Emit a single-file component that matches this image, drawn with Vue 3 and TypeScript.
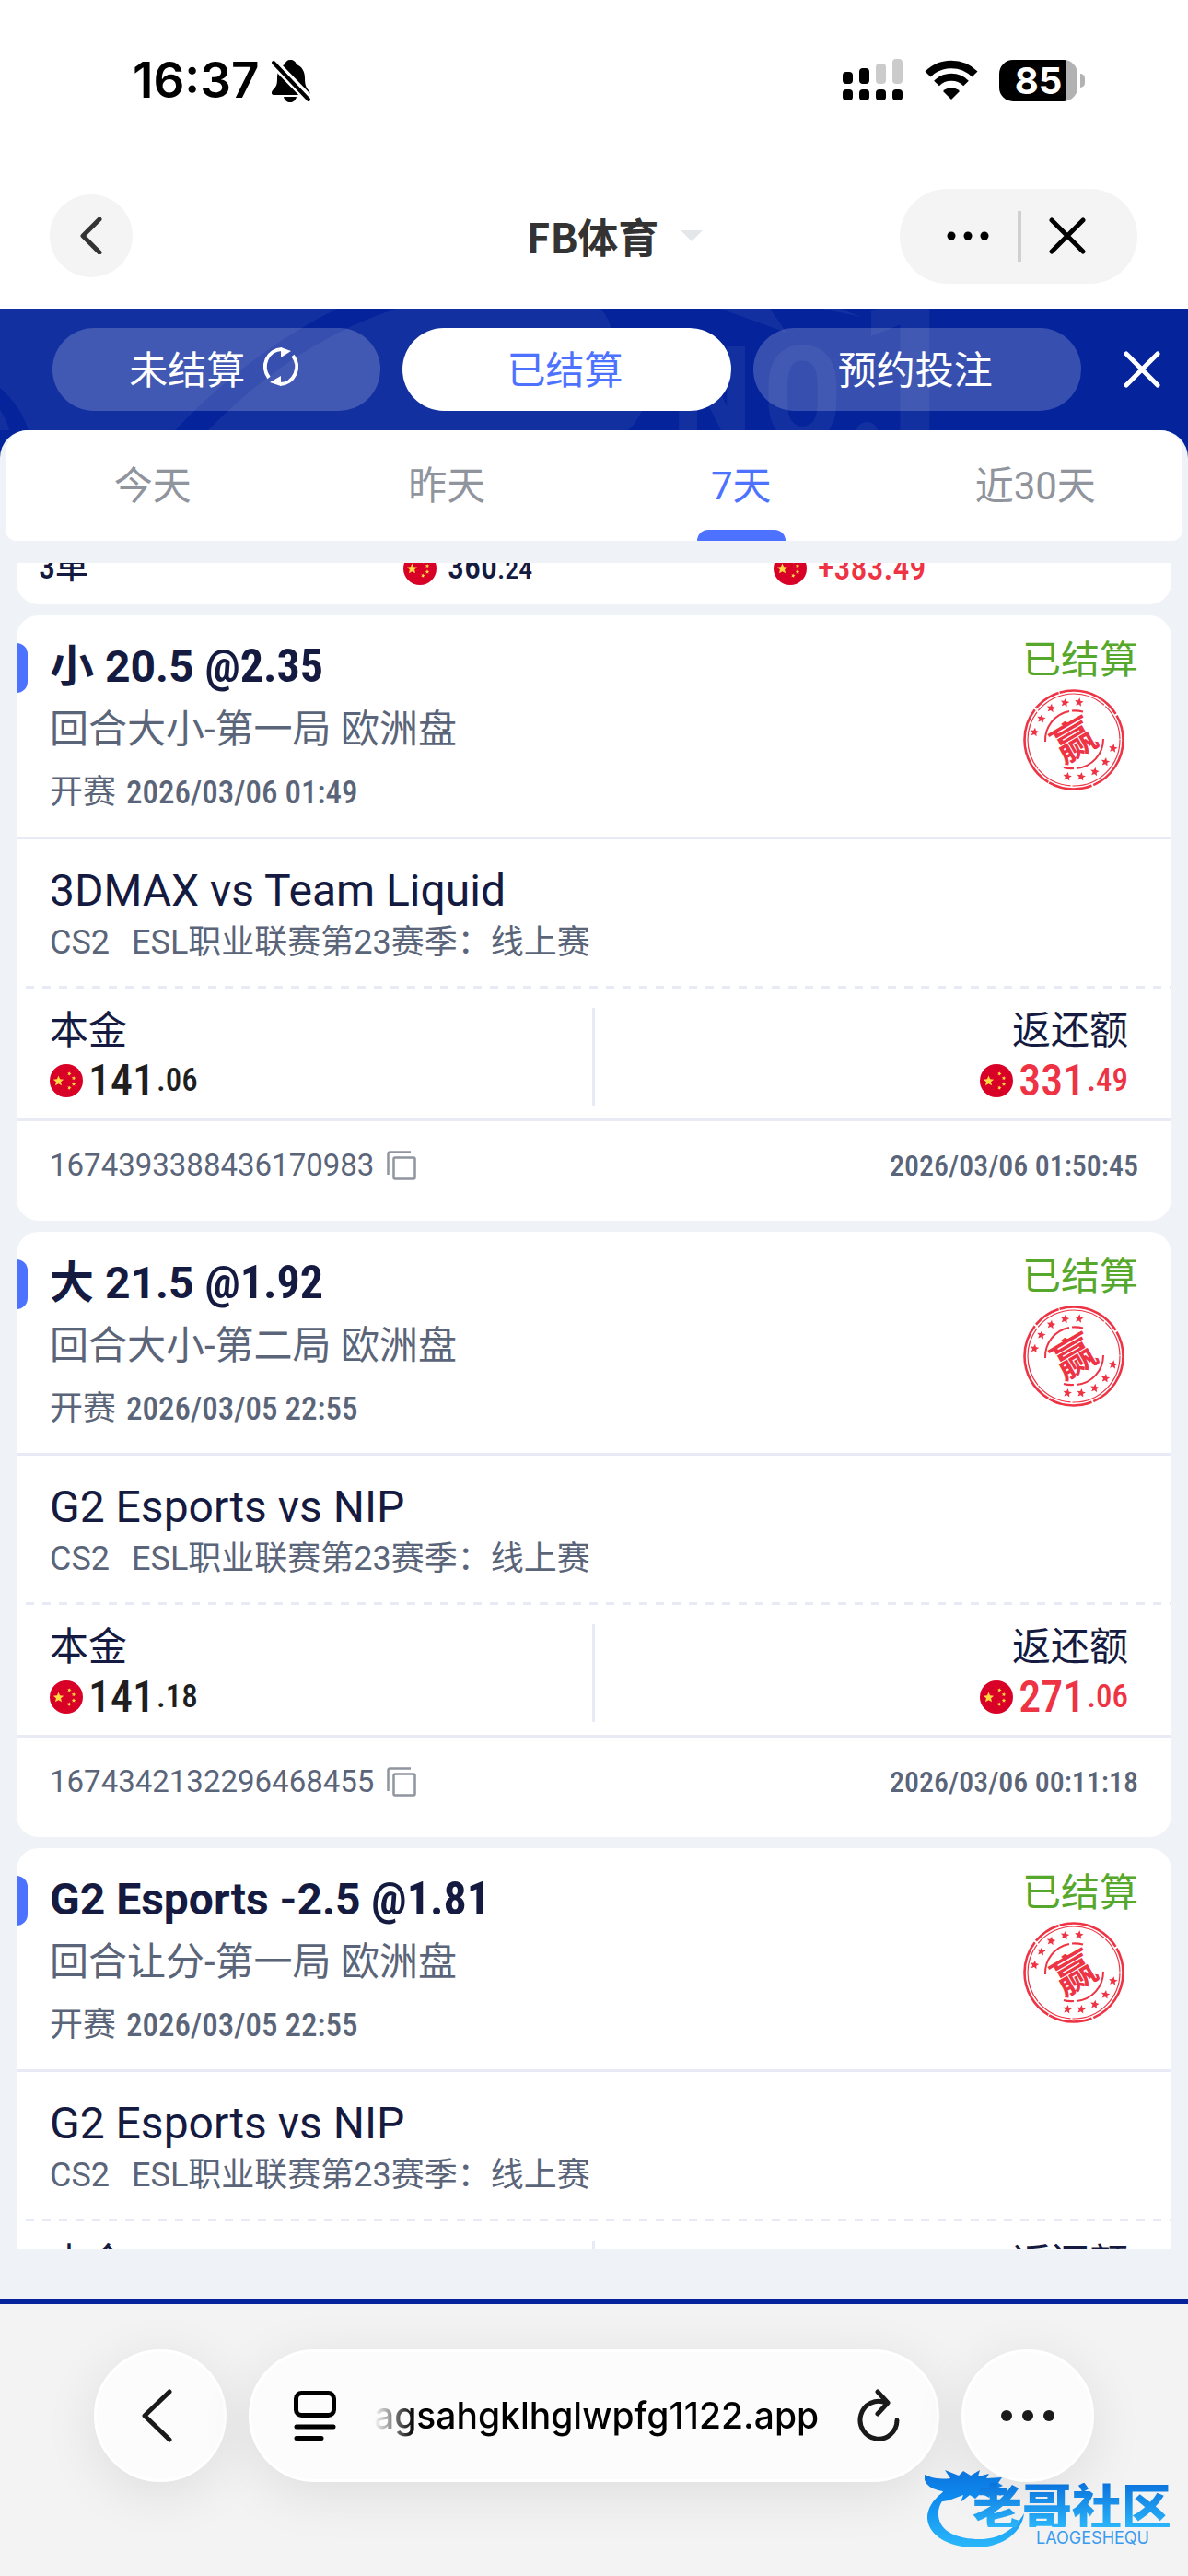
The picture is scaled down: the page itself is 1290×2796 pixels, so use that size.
<script setup lang="ts">
import { ref } from 'vue'

interface Bet {
  pick: string
  odds: string
  market: string
  start: string
  match: string
  league: string
  stake: [string, string]
  payout: [string, string]
  id: string
  settledAt: string
}

const league = 'ESL职业联赛第23赛季：线上赛'

const bets: Bet[] = [
  {
    pick: '小 20.5', odds: '@2.35', market: '回合大小-第一局 欧洲盘', start: '2026/03/06 01:49',
    match: '3DMAX vs Team Liquid', league, stake: ['141', '.06'], payout: ['331', '.49'],
    id: '1674393388436170983', settledAt: '2026/03/06 01:50:45',
  },
  {
    pick: '大 21.5', odds: '@1.92', market: '回合大小-第二局 欧洲盘', start: '2026/03/05 22:55',
    match: 'G2 Esports vs NIP', league, stake: ['141', '.18'], payout: ['271', '.06'],
    id: '1674342132296468455', settledAt: '2026/03/06 00:11:18',
  },
  {
    pick: 'G2 Esports -2.5', odds: '@1.81', market: '回合让分-第一局 欧洲盘', start: '2026/03/05 22:55',
    match: 'G2 Esports vs NIP', league, stake: ['78', '.00'], payout: ['141', '.18'],
    id: '1674342098112086142', settledAt: '2026/03/05 23:41:06',
  },
]

const ranges = ['今天', '昨天', '7天', '近30天']
const activeRange = ref(2)
const address = ref('agsahgklhglwpfg1122.app')

function star(cx: number, cy: number, r: number, turn = 0): string {
  const pts: string[] = []
  for (let i = 0; i < 10; i++) {
    const a = (Math.PI / 5) * i - Math.PI / 2 + turn
    const d = i % 2 === 0 ? r : r * 0.45
    pts.push(`${(cx + d * Math.cos(a)).toFixed(2)},${(cy + d * Math.sin(a)).toFixed(2)}`)
  }
  return pts.join(' ')
}

const flagStars = [
  star(9.5, 18.5, 6), star(21.3, 10.5, 2.4, 0.3), star(26, 15.3, 2.4, 0.1),
  star(26, 21.7, 2.4), star(21.3, 25.7, 2.4, 0.3),
]
const stampStars = [
  [12.3, 46.7], [19.7, 32], [30.3, 20.7], [45.3, 14.7], [60.7, 14.3],
  [97.7, 64.3], [89.3, 79], [77.7, 89.7], [63, 95], [48, 95],
].map(([x, y]) => star(x, y, 5, 0.15))
</script>

<template>
  <div class="app">
    <svg width="0" height="0" class="defs" aria-hidden="true">
      <symbol id="flag" viewBox="0 0 36 36">
        <circle cx="18" cy="18" r="18" fill="#d80027" />
        <polygon v-for="(p, i) in flagStars" :key="i" :points="p" fill="#ffda44" />
      </symbol>
    </svg>

    <div class="status">
      <div class="status-left">
        <span class="clock">16:37</span>
        <svg width="44" height="48" viewBox="0 0 44 48" aria-hidden="true">
          <path d="M21 2c4 0 6 2 7 5 6 2 9 8 9 15 0 8 2 11 5 14 1 3 0 4-3 4H4c-3 0-4-2-2-5 4-4 5-6 5-13 0-8 3-13 8-15 1-3 3-5 6-5z" />
          <path d="M14 42h14c-1 4-4 6-7 6s-6-2-7-6z" />
          <path d="M2 4l40 41" stroke="#fff" stroke-width="10" />
          <path d="M3 5l38 40" stroke="#000" stroke-width="4" stroke-linecap="round" />
        </svg>
      </div>
      <div class="status-right">
        <svg width="66" height="46" viewBox="0 0 66 46" aria-hidden="true">
          <rect x="0" y="14" width="11" height="13" rx="4" />
          <rect x="18" y="10" width="11" height="17" rx="4" />
          <rect x="36" y="5" width="11" height="22" rx="4" fill="#cbcbcb" />
          <rect x="54" y="0" width="11" height="27" rx="4" fill="#cbcbcb" />
          <rect v-for="x in [0, 18, 36, 54]" :key="x" :x="x" y="33" width="11" height="12" rx="4" />
        </svg>
        <svg width="58" height="44" viewBox="0 0 58 44" aria-hidden="true">
          <path d="M3.500 15.500a36 36 0 0 1 51 0" fill="none" stroke="#000" stroke-width="8.500" />
          <path d="M13 25.500a22.500 22.500 0 0 1 32 0" fill="none" stroke="#000" stroke-width="8" />
          <path d="M29 43l-9-9a12.700 12.700 0 0 1 18 0z" />
        </svg>
        <div class="battery">
          <span class="battery-body">85</span>
          <span class="battery-nub"></span>
        </div>
      </div>
    </div>

    <nav class="nav">
      <button class="nav-back" aria-label="返回">
        <svg width="24" height="40" viewBox="0 0 24 40"><path d="M21 2L3 20l18 18" /></svg>
      </button>
      <h1 class="nav-title">FB体育 <i class="caret"></i></h1>
      <div class="capsule">
        <button aria-label="更多">
          <svg width="46" height="10" viewBox="0 0 46 10"><circle v-for="x in [5, 23, 41]" :key="x" :cx="x" cy="5" r="4.500" /></svg>
        </button>
        <i class="capsule-line"></i>
        <button aria-label="关闭">
          <svg width="40" height="40" viewBox="0 0 40 40"><path d="M3 3l34 34M37 3L3 37" fill="none" stroke="#000" stroke-width="5" stroke-linecap="round" /></svg>
        </button>
      </div>
    </nav>

    <div class="page">
      <header class="hero">
        <svg class="hero-art" viewBox="0 0 1290 132" preserveAspectRatio="none" aria-hidden="true">
          <g fill="#fff" fill-opacity="0.060">
            <path d="M0 0H366Q270 48 190 132H31Q22 105 0 86z" />
            <path d="M0 110Q7 120 10 132H0z" />
            <path d="M430 0H652Q664 12 664 30L700 100Q696 120 682 132H226Q320 36 430 0z" />
            <path d="M782 0h54l18 26zM892 0h20l24 9z" />
            <text x="729" y="144" class="art-no">N</text>
            <text x="828" y="144" class="art-no">O</text>
            <text x="921" y="144" class="art-no">.</text>
            <text x="928" y="144" class="art-one">1</text>
          </g>
        </svg>
        <button class="pill">
          未结算
          <svg width="42" height="44" viewBox="0 0 42 44" aria-hidden="true">
            <path d="M8 34A18.500 19 0 0 1 22 3M34 10A18.500 19 0 0 1 20 41" fill="none" stroke="#fff" stroke-width="4" />
            <path d="M21 1l11 4-11 7zM21 43l-12-4 12-7z" fill="#fff" />
          </svg>
        </button>
        <button class="pill active">已结算</button>
        <button class="pill">预约投注</button>
        <button class="hero-close" aria-label="关闭">
          <svg width="40" height="40" viewBox="0 0 40 40"><path d="M3 3l34 34M37 3L3 37" fill="none" stroke="#fff" stroke-width="5" stroke-linecap="round" /></svg>
        </button>
      </header>

      <main class="panel">
        <div class="tabs" role="tablist">
          <button
            v-for="(r, i) in ranges" :key="r" role="tab" class="tab"
            :class="{ on: i === activeRange }" :aria-selected="i === activeRange" @click="activeRange = i"
          >{{ r }}</button>
        </div>

        <div class="list">
          <section class="summary">
            <span class="count">3单</span>
            <span class="sum"><svg class="flag"><use href="#flag" /></svg><b>360<small>.24</small></b></span>
            <span class="sum win"><svg class="flag"><use href="#flag" /></svg><b>+383.49</b></span>
          </section>

          <article v-for="b in bets" :key="b.id" class="card">
            <div class="head">
              <div class="head-text">
                <h2>{{ b.pick }} <span class="odds">{{ b.odds }}</span></h2>
                <p class="market">{{ b.market }}</p>
                <p class="start">开赛 <time>{{ b.start }}</time></p>
              </div>
              <div class="result">
                <span class="state">已结算</span>
                <svg class="stamp" viewBox="0 0 110 110" role="img" aria-label="赢">
                  <g fill="none" stroke="#ee3344">
                    <circle cx="55" cy="55" r="53.500" stroke-width="2.600" stroke-dasharray="62 2 48 1 90 2 30 1 70 2" />
                    <circle cx="55" cy="55" r="50" stroke-width="1.200" stroke-dasharray="80 2 40 1 66 2" />
                    <path d="M24 57A32 32 0 0 1 50 24M53 23.500q6-.5 12 1" stroke-width="2" />
                    <path d="M87 54A32 32 0 0 1 58 86M55 86q-6 .5-11-1" stroke-width="2" />
                  </g>
                  <polygon v-for="(p, i) in stampStars" :key="i" :points="p" fill="#ee3344" />
                  <text x="55" y="72" text-anchor="middle" transform="rotate(-30 55 55)" class="stamp-char">赢</text>
                </svg>
              </div>
            </div>

            <div class="match">
              <h3>{{ b.match }}</h3>
              <p><span>CS2</span><span>{{ b.league }}</span></p>
            </div>
            <div class="dashes"></div>

            <div class="money">
              <div class="cell">
                <span>本金</span>
                <span class="amount"><svg class="flag"><use href="#flag" /></svg><b>{{ b.stake[0] }}</b><small>{{ b.stake[1] }}</small></span>
              </div>
              <i class="split"></i>
              <div class="cell right">
                <span>返还额</span>
                <span class="amount win"><svg class="flag"><use href="#flag" /></svg><b>{{ b.payout[0] }}</b><small>{{ b.payout[1] }}</small></span>
              </div>
            </div>

            <div class="foot">
              <span>{{ b.id }}</span>
              <button class="copy" aria-label="复制">
                <svg width="32" height="32" viewBox="0 0 32 32" fill="none" stroke="#8f949e" stroke-width="2.500">
                  <path d="M1.500 26V3.500q0-2 2-2H26" /><rect x="7.500" y="7.500" width="23" height="23" rx="1.500" />
                </svg>
              </button>
              <time>{{ b.settledAt }}</time>
            </div>
          </article>
        </div>
      </main>
    </div>

    <footer class="browser">
      <button class="round back" aria-label="后退">
        <svg width="34" height="58" viewBox="0 0 34 58"><path d="M31 3L4 29l27 26" fill="none" stroke="#1a1a1a" stroke-width="5" stroke-linecap="round" stroke-linejoin="round" /></svg>
      </button>
      <div class="address">
        <svg width="46" height="54" viewBox="0 0 46 54" fill="none" stroke="#000" stroke-width="5" stroke-linecap="round" aria-hidden="true">
          <rect x="2.500" y="2.500" width="41" height="24" rx="6" /><path d="M3 39h40M3 51.500h27" />
        </svg>
        <input v-model="address" aria-label="网址" />
        <button class="reload" aria-label="刷新">
          <svg width="46" height="58" viewBox="0 0 46 58" fill="none" stroke="#1a1a1a" stroke-width="5" stroke-linecap="round" stroke-linejoin="round">
            <path d="M43 34A20 20.500 0 1 1 31 15" /><path d="M22 3l11 12-11 12" />
          </svg>
        </button>
      </div>
      <button class="round" aria-label="菜单">
        <svg width="60" height="12" viewBox="0 0 60 12" fill="#1a1a1a"><circle v-for="x in [7, 30, 53]" :key="x" :cx="x" cy="6" r="6" /></svg>
      </button>
    </footer>

    <div class="brand">
      <svg width="112" height="92" viewBox="0 0 112 92" aria-hidden="true">
        <defs>
          <linearGradient id="dragon" gradientUnits="userSpaceOnUse" x1="0" y1="4" x2="0" y2="90">
            <stop offset="0" stop-color="#0a72dc" /><stop offset="0.400" stop-color="#0f8df0" /><stop offset="1" stop-color="#2bb8fa" />
          </linearGradient>
        </defs>
        <g fill="url(#dragon)">
          <path d="M46 18C18 24 2 42 3 58C5 78 30 90 58 89C86 88 106 72 108 52C98 70 80 80 60 80C36 80 16 72 15 54C14 38 28 26 50 20z" />
          <path d="M0 10q12 6 28 4l-6-9 15 6 5-5 8 5 10-6-2 7 12-3-3 5 17-1-4 6 5 3-7 3 5 8-10-4-3 6-9-5-6 6-6-4-10 8 3-8-16 6-12 2 6-12q-16-2-20-12z" />
        </g>
      </svg>
      <div class="brand-text">
        <strong>老哥社区</strong>
        <span>LAOGESHEQU</span>
      </div>
    </div>
  </div>
</template>

<style>
body {
  background: #fff;
}
</style>

<style scoped>
.app {
  --ui: Roboto, 'Noto Sans CJK SC', sans-serif;
  --din: 'Roboto Condensed', Roboto, 'Noto Sans CJK SC', sans-serif;
  position: relative;
  display: flex;
  flex-direction: column;
  height: 100vh;
  overflow: hidden;
  font-family: var(--ui);
  color: #141a40;
}
.app * {
  box-sizing: border-box;
}
.defs {
  position: absolute;
}
svg {
  display: block;
  flex: none;
}
button {
  margin: 0;
  padding: 0;
  border: 0;
  background: none;
  font: inherit;
  color: inherit;
}
h1, h2, h3, p {
  margin: 0;
  font-weight: 400;
}

.status {
  display: flex;
  justify-content: space-between;
  align-items: center;
  height: 174px;
  padding: 0 112px 0 144px;
  flex: none;
}
.status-left, .status-right {
  display: flex;
  align-items: center;
}
.status-left {
  gap: 13px;
}
.status-right {
  gap: 23px;
}
.clock {
  font: 600 53px/60px Inter, sans-serif;
  color: #000;
}
.battery {
  display: flex;
  align-items: center;
  gap: 3px;
}
.battery-body {
  width: 85px;
  height: 45px;
  border-radius: 15px;
  background: linear-gradient(90deg, #000 85%, #b2b2b2 85%);
  color: #fff;
  font: 700 40px/45px Inter, sans-serif;
  text-align: center;
}
.battery-nub {
  width: 5px;
  height: 15px;
  border-radius: 0 5px 5px 0;
  background: #b2b2b2;
}

.nav {
  display: flex;
  align-items: center;
  justify-content: space-between;
  height: 161px;
  padding: 3px 55px 0 54px;
  flex: none;
}
.nav-back {
  display: flex;
  align-items: center;
  justify-content: center;
  width: 90px;
  height: 90px;
  border-radius: 50%;
  background: #f4f4f4;
}
.nav-back path {
  fill: none;
  stroke: #333;
  stroke-width: 5px;
  stroke-linecap: round;
  stroke-linejoin: round;
}
.nav-title {
  flex: 1;
  padding-left: 214px;
  display: flex;
  align-items: center;
  justify-content: center;
  gap: 24px;
  font: 700 44px/60px 'Noto Sans CJK SC', sans-serif;
  color: #333;
}
.caret {
  border: 12px solid transparent;
  border-top-color: #e4e7ea;
  border-bottom: 0;
}
.capsule {
  display: flex;
  align-items: center;
  justify-content: space-between;
  width: 258px;
  height: 103px;
  padding: 0 56px 0 51px;
  border-radius: 52px;
  background: #f4f4f4;
}
.capsule-line {
  width: 4px;
  height: 55px;
  background: #d0d0d0;
}

.page {
  display: flex;
  flex-direction: column;
  flex: 1;
  min-height: 0;
  background: #05249c;
  border-bottom: 6px solid #05249c;
}
.hero {
  position: relative;
  display: flex;
  align-items: center;
  gap: 24px;
  height: 132px;
  padding: 0 30px 0 57px;
  flex: none;
}
.hero-art {
  position: absolute;
  inset: 0;
  width: 100%;
  height: 100%;
}
.art-no {
  font: 700 144px 'Roboto Condensed', Roboto, sans-serif;
}
.art-one {
  font: 700 232px 'Roboto Condensed', Roboto, sans-serif;
}
.pill {
  position: relative;
  flex: 1;
  display: flex;
  align-items: center;
  justify-content: center;
  gap: 18px;
  height: 90px;
  padding: 0 4px 6px 0;
  border-radius: 45px;
  background: rgba(255, 255, 255, 0.2);
  color: #fff;
  font-size: 42px;
}
.pill.active {
  background: #fff;
  color: #4d72ff;
}
.hero-close {
  position: relative;
  margin-left: 22px;
}

.panel {
  display: flex;
  flex-direction: column;
  flex: 1;
  min-height: 0;
  padding: 0 6px 54px;
  border-radius: 30px 30px 0 0;
  background: #eff2f6;
}
.tabs {
  display: flex;
  height: 120px;
  flex: none;
  border-radius: 24px 24px 12px 12px;
  background: #fff;
}
.tab {
  position: relative;
  flex: 1;
  padding-bottom: 8px;
  font-size: 42px;
  color: #8f949d;
}
.tab.on {
  color: #4d72ff;
}
.tab.on::after {
  content: '';
  position: absolute;
  left: 50%;
  bottom: 0;
  width: 96px;
  height: 12px;
  margin-left: -48px;
  border-radius: 12px 12px 0 0;
  background: #4d72ff;
}

.list {
  display: flex;
  flex-direction: column;
  gap: 12px;
  flex: 1;
  min-height: 0;
  margin-top: 24px;
  padding: 0 12px;
  overflow: hidden;
}
.flag {
  width: 36px;
  height: 36px;
}
.summary {
  display: grid;
  grid-template-columns: repeat(3, 1fr);
  align-content: end;
  height: 45px;
  padding: 0 30px 14px 18px;
  flex: none;
  overflow: hidden;
  border-radius: 0 0 24px 24px;
  background: #fff;
  font: 500 36px/48px var(--din);
}
.count {
  padding-left: 6px;
}
.sum {
  display: flex;
  align-items: center;
  gap: 12px;
}
.sum b {
  font-weight: 500;
}
.sum small {
  font-size: 30px;
}
.sum.win, .amount.win {
  color: #ee3344;
}

.card {
  flex: none;
  border-radius: 24px;
  background: #fff;
}
.head {
  display: flex;
  justify-content: space-between;
  padding: 22px 36px 14px;
  border-bottom: 3px solid #e8ebf6;
}
.head-text {
  position: relative;
  line-height: 68px;
}
.head-text::before {
  content: '';
  position: absolute;
  left: -36px;
  top: 8px;
  width: 12px;
  height: 54px;
  border-radius: 0 12px 12px 0;
  background: #4d72ff;
}
h2 {
  font-size: 48px;
  font-weight: 700;
}
.odds {
  font-family: var(--din);
  font-size: 50px;
  line-height: 1;
}
.market {
  font-size: 42px;
  color: #5b6579;
}
.start {
  font-size: 36px;
  color: #5b6579;
}
.start time {
  margin-left: 2px;
  font: 500 35px/36px var(--din);
}
.result {
  display: flex;
  flex-direction: column;
  align-items: flex-end;
}
.state {
  font-size: 42px;
  line-height: 54px;
  color: #56a82c;
}
.stamp {
  width: 110px;
  height: 110px;
  margin: 4px 15px 0 0;
}
.stamp-char {
  font: 700 46px 'Noto Sans CJK SC', sans-serif;
  fill: #ee3344;
}
.match {
  padding: 28px 36px 19px;
  line-height: 56px;
}
h3 {
  font-size: 48px;
}
.match p {
  display: flex;
  gap: 24px;
  font-size: 36px;
  color: #5b6579;
}
.dashes {
  height: 3px;
  background: linear-gradient(90deg, #e8ebf6 50%, transparent 50%) 10px 0 / 18px 3px;
}
.money {
  display: flex;
  padding: 19px 36px 14px;
  border-bottom: 3px solid #e8ebf6;
  font-size: 42px;
  line-height: 54px;
}
.cell {
  flex: 1 1 50%;
  display: flex;
  flex-direction: column;
}
.cell.right {
  align-items: flex-end;
  padding-right: 11px;
}
.split {
  width: 3px;
  flex: none;
  margin-top: 2px;
  background: #e8ebf6;
}
.amount {
  display: flex;
  align-items: center;
  gap: 6px;
  font-family: var(--din);
  color: #1f1f1f;
}
.amount b {
  font-size: 48px;
  font-weight: 500;
}
.amount small {
  margin-left: -4px;
  font-size: 35px;
  font-weight: 500;
}
.foot {
  display: flex;
  align-items: center;
  padding: 0 36px 12px;
  line-height: 96px;
  font-size: 33px;
  color: #5b6579;
}
.copy {
  margin-left: 14px;
}
.foot time {
  margin-left: auto;
  font: 500 32px/96px var(--din);
}

.browser {
  display: flex;
  justify-content: center;
  gap: 24px;
  height: 295px;
  flex: none;
  padding: 49px 102px 0;
  background: #f3f3f3;
}
.round, .address {
  height: 144px;
  border: 3px solid #fff;
  border-radius: 72px;
  background: #fcfcfc;
  box-shadow: 0 12px 60px rgba(0, 0, 0, 0.09);
}
.round {
  display: flex;
  align-items: center;
  justify-content: center;
  width: 144px;
}
.round.back {
  padding-right: 8px;
}
.address {
  flex: 1;
  display: flex;
  align-items: center;
  min-width: 0;
  padding: 0 40px 0 46px;
}
.address input {
  flex: 1;
  min-width: 0;
  margin: 0 43px 0 41px;
  padding: 0;
  border: 0;
  outline: 0;
  background: none;
  color: #000;
  text-align: right;
  font: 500 39px/60px Inter, sans-serif;
  mask-image: linear-gradient(90deg, transparent, #000 44px);
}

.brand {
  position: absolute;
  right: 18px;
  bottom: 28px;
  display: flex;
}
.brand-text {
  display: flex;
  flex-direction: column;
  align-items: flex-end;
  margin: 19px 0 0 -60px;
}
.brand strong {
  background: linear-gradient(#0a72dc, #2bb5fa);
  background-clip: text;
  color: transparent;
  font: 900 54px/48px 'Noto Sans CJK SC', sans-serif;
}
.brand span {
  margin-top: 4px;
  padding-right: 24px;
  color: #3a9bee;
  font: 400 18px/16px Inter, sans-serif;
}
</style>
